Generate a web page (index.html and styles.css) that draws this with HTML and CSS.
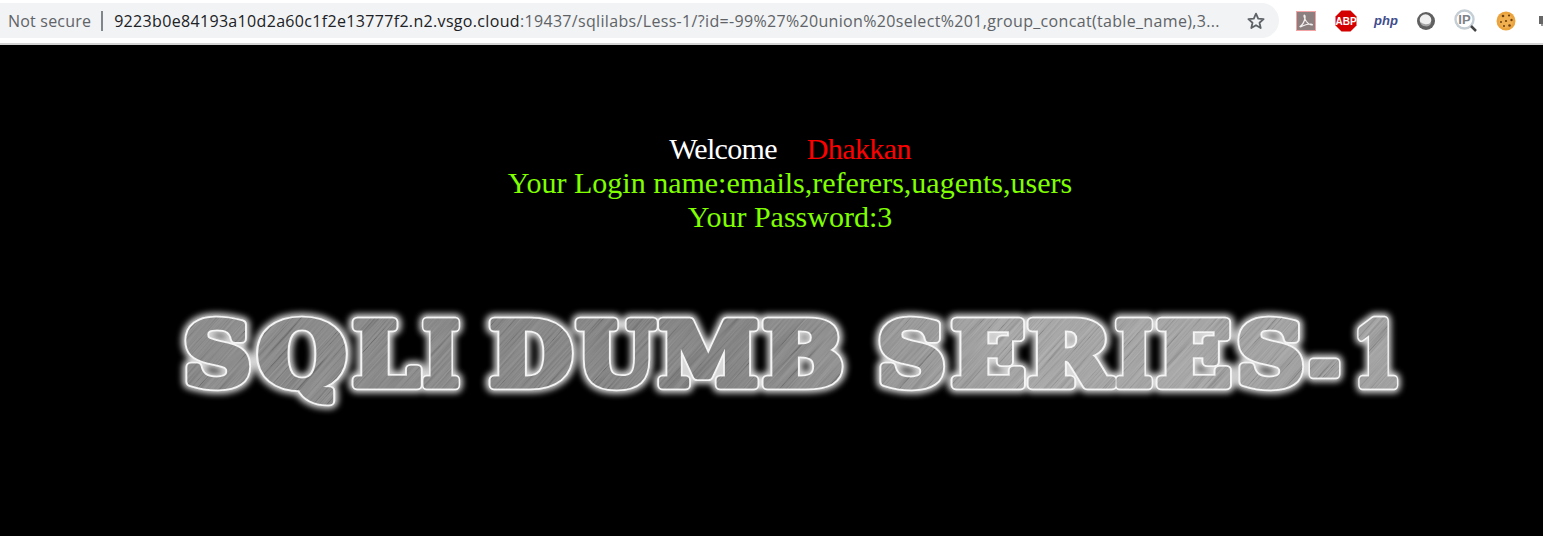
FILE: index.html
```html
<!DOCTYPE html>
<html lang="en">
<head>
<meta charset="utf-8">
<title>Less-1</title>
<link rel="stylesheet" href="styles.css">
</head>
<body>
<header class="toolbar">
  <div class="omnibox">
    <div class="address">
      <span class="not-secure">Not secure</span><span class="sep"></span><span class="url"><span class="host">9223b0e84193a10d2a60c1f2e13777f2.n2.vsgo.cloud</span>:19437/sqlilabs/Less-1/?id=-99%27%20union%20select%201,group_concat(table_name),3...</span>
    </div>
    <svg class="star" width="20" height="20" viewBox="0 0 20 20"><path d="M10 2.6l2.2 5 5.4.5-4.1 3.6 1.2 5.3L10 14.2 5.300 17l1.200-5.300-4.100-3.600 5.400-.5z" fill="none" stroke="#5f6368" stroke-width="1.800" stroke-linejoin="round"/></svg>
  </div>
  <div class="extensions">
    <span class="ext"><svg width="20" height="20" viewBox="0 0 20 20"><rect x=".5" y=".5" width="19" height="19" fill="#8c7f80" stroke="#f3a3a3"/><path d="M4 15.500c2-1 4-4.500 5-8 .3-1.500 0-3.500-.6-3.500-.8 0 -.5 3 2 6.500 1.500 2 3.500 3.500 5.500 3.500 1 0 .5-1-1-1-3 0-6 .8-8.500 2-1 .6-2 1.200-2.400.5z" fill="none" stroke="#f2eeee" stroke-width="1.200"/></svg></span>
    <span class="ext"><svg width="22" height="22" viewBox="0 0 22 22"><path d="M6.500 .5h9l6 6v9l-6 6h-9l-6-6v-9z" fill="#d40000"/><text x="11" y="14.800" class="abp">ABP</text></svg></span>
    <span class="ext"><span class="php">php</span></span>
    <span class="ext"><svg width="20" height="20" viewBox="0 0 20 20"><circle cx="10" cy="10" r="9" fill="#606060"/><circle cx="9.500" cy="9" r="5.800" fill="#f0f0f0"/><path d="M4 10.500a6 6 0 0 0 11.500 1 7 5 0 0 1-11.500-1z" fill="#a5a5a5"/></svg></span>
    <span class="ext"><svg width="24" height="24" viewBox="0 0 24 24"><circle cx="10.500" cy="10.500" r="9" fill="#fff" stroke="#c5ced4" stroke-width="2.400"/><text x="10.500" y="15.300" class="ip">IP</text><path d="M17 17l5 5" stroke="#444" stroke-width="2.500"/></svg></span>
    <span class="ext"><svg width="20" height="20" viewBox="0 0 20 20"><circle cx="10" cy="10" r="9.500" fill="#eba33c"/><circle cx="10" cy="10" r="7" fill="#f0b050"/><g fill="#6d3f12"><circle cx="7" cy="5" r="1.300"/><circle cx="13" cy="4.500" r="1.100"/><circle cx="15.500" cy="9" r="1.200"/><circle cx="10" cy="10" r="1.100"/><circle cx="5" cy="11" r="1"/><circle cx="13.500" cy="14.500" r="1.300"/><circle cx="8" cy="15" r="1"/></g></svg></span>
    <span class="ext"><svg width="20" height="20" viewBox="0 0 20 20"><rect x="3" y="5" width="15" height="8" fill="#666"/><rect x="5" y="13" width="11" height="2" fill="#999"/></svg></span>
  </div>
</header>
<main class="page">
  <div class="message">
    <div><span class="welcome">Welcome</span><span class="gap"></span><span class="name">Dhakkan</span></div>
    <div>Your Login name:emails,referers,uagents,users</div>
    <div>Your Password:3</div>
  </div>
  <svg class="logo" width="1543" height="130" viewBox="0 300 1543 130" role="img" aria-label="SQLI DUMB SERIES-1">
    <defs>
      <linearGradient id="metal" gradientUnits="userSpaceOnUse" x1="180" y1="320" x2="1400" y2="390">
        <stop offset="0" stop-color="#858585"/><stop offset=".45" stop-color="#7c7c7c"/><stop offset=".7" stop-color="#a4a4a4"/><stop offset="1" stop-color="#9c9c9c"/>
      </linearGradient>
      <filter id="scratch" x="0" y="0" width="100%" height="100%">
        <feTurbulence type="fractalNoise" baseFrequency="0.012 0.7" numOctaves="2" seed="4"/>
        <feColorMatrix type="matrix" values="2 0 0 0 -.5  2 0 0 0 -.5  2 0 0 0 -.5  0 0 0 0 .15"/>
      </filter>
      <filter id="glow" x="-5%" y="-30%" width="110%" height="160%"><feGaussianBlur stdDeviation="3.400"/></filter>
      <filter id="soft" x="-5%" y="-30%" width="110%" height="160%"><feGaussianBlur stdDeviation=".7"/></filter>
      <g id="word" class="display">
        <text x="184" y="384.500" textLength="67" lengthAdjust="spacingAndGlyphs">S</text>
        <text x="258" y="384.500" textLength="88" lengthAdjust="spacingAndGlyphs">Q</text>
        <text x="353" y="384.500" textLength="66" lengthAdjust="spacingAndGlyphs">L</text>
        <text x="423" y="384.500" textLength="36" lengthAdjust="spacingAndGlyphs">I</text>
        <text x="490" y="384.500" textLength="82" lengthAdjust="spacingAndGlyphs">D</text>
        <text x="577" y="384.500" textLength="78" lengthAdjust="spacingAndGlyphs">U</text>
        <text x="659" y="384.500" textLength="99" lengthAdjust="spacingAndGlyphs">M</text>
        <text x="763" y="384.500" textLength="80" lengthAdjust="spacingAndGlyphs">B</text>
        <text x="878" y="384.500" textLength="67" lengthAdjust="spacingAndGlyphs">S</text>
        <text x="952" y="384.500" textLength="73" lengthAdjust="spacingAndGlyphs">E</text>
        <text x="1028" y="384.500" textLength="83" lengthAdjust="spacingAndGlyphs">R</text>
        <text x="1116" y="384.500" textLength="36" lengthAdjust="spacingAndGlyphs">I</text>
        <text x="1157" y="384.500" textLength="74" lengthAdjust="spacingAndGlyphs">E</text>
        <text x="1237" y="384.500" textLength="67" lengthAdjust="spacingAndGlyphs">S</text>
        <text x="1309" y="391" textLength="31" lengthAdjust="spacingAndGlyphs">-</text>
        <text x="1353" y="384.500" textLength="48" lengthAdjust="spacingAndGlyphs">1</text>
      </g>
      <mask id="letters" maskUnits="userSpaceOnUse" x="0" y="300" width="1543" height="130"><use href="#word" class="mask-fill"/></mask>
    </defs>
    <use href="#word" class="halo" filter="url(#glow)"/>
    <use href="#word" class="edge" filter="url(#soft)"/>
    <g mask="url(#letters)">
      <rect x="0" y="300" width="1543" height="130" fill="url(#metal)"/>
      <g transform="rotate(-48 790 360)"><rect x="40" y="-440" width="1500" height="1600" filter="url(#scratch)"/></g>
    </g>
  </svg>
</main>
</body>
</html>
```
FILE: styles.css
```css
* { box-sizing: border-box; }
html, body { margin: 0; padding: 0; }
body { width: 1543px; height: 536px; overflow: hidden; background: #000; }

.toolbar {
  display: flex;
  width: 1543px;
  height: 45px;
  padding-top: 3px;
  background: #fff;
  border-bottom: 2px solid #d3d3d3;
  overflow: hidden;
  font-family: "Open Sans", "Noto Sans", sans-serif;
}
.omnibox {
  flex: 0 0 1279px;
  height: 35px;
  display: flex;
  align-items: center;
  justify-content: space-between;
  padding: 0 13px 0 8px;
  background: #f1f3f4;
  border-radius: 0 18px 18px 0;
}
.address {
  display: flex;
  align-items: center;
  white-space: nowrap;
  font-size: 16px;
  color: #5f6368;
}
.not-secure { letter-spacing: .2px; }
.sep { width: 2px; height: 20px; margin: 0 11px 0 10px; background: #80868b; }
.url { letter-spacing: .33px; }
.host { color: #202124; }
.star { display: block; }

.extensions {
  display: flex;
  flex: none;
  height: 35px;
  padding-left: 7px;
}
.ext {
  flex: 0 0 40px;
  display: flex;
  align-items: center;
  justify-content: center;
}
.abp {
  font: 700 10px "Liberation Sans", sans-serif;
  fill: #fff;
  text-anchor: middle;
}
.ip {
  font: 700 13px "Liberation Sans", sans-serif;
  fill: #7d8387;
  text-anchor: middle;
}
.php {
  font: italic 700 13px "Liberation Sans", sans-serif;
  color: #3f4d8c;
}

.page { display: block; }
.message {
  padding: 87px 0 0 37px;
  text-align: center;
  font-family: "Liberation Serif", serif;
  font-size: 30px;
  line-height: 34px;
  color: #7fff00;
}
.welcome { color: #fff; letter-spacing: -.7px; }
.name { color: #f00; letter-spacing: -.6px; }
.gap { display: inline-block; width: 30px; }

.logo { display: block; margin-top: 66px; }
.display {
  font-family: "DejaVu Serif", serif;
  font-weight: 700;
  font-size: 86px;
}
.mask-fill { fill: #fff; stroke: #fff; stroke-width: 7px; stroke-linejoin: round; }
.halo { fill: #fff; stroke: #fff; stroke-width: 16px; opacity: .85; stroke-linejoin: round; }
.edge { fill: #fff; stroke: #f4f4f4; stroke-width: 10.500px; stroke-linejoin: round; }
```
